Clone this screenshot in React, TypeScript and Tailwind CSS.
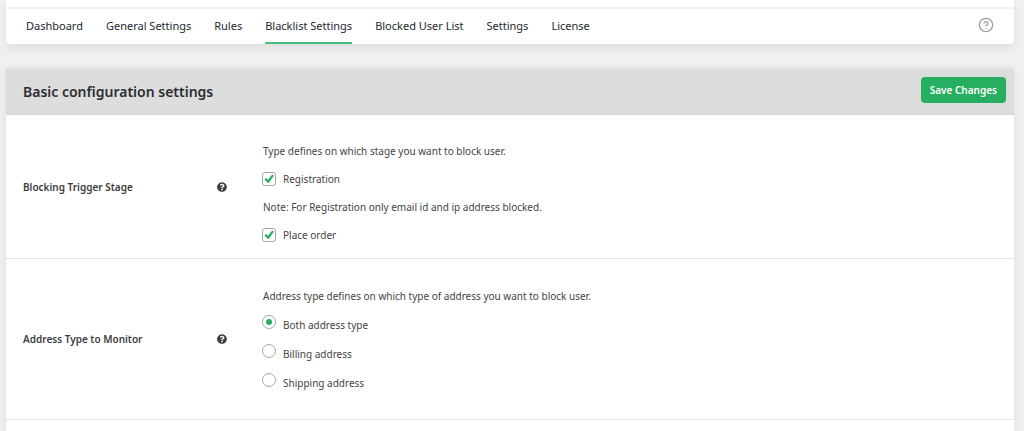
import { useState } from "react";
import { FaQuestionCircle } from "react-icons/fa";
import { CircleHelp } from "lucide-react";

const TABS = [
  "Dashboard",
  "General Settings",
  "Rules",
  "Blacklist Settings",
  "Blocked User List",
  "Settings",
  "License",
];

const ADDRESS_TYPES = [
  { value: "both", label: "Both address type" },
  { value: "billing", label: "Billing address" },
  { value: "shipping", label: "Shipping address" },
];

interface CheckOptionProps {
  label: string;
  checked: boolean;
  onChange: (checked: boolean) => void;
}

function CheckOption({ label, checked, onChange }: CheckOptionProps) {
  return (
    <label className="-ml-px flex w-fit items-center gap-[7px]">
      <span className="grid size-3.5 place-items-center">
        <input
          type="checkbox"
          checked={checked}
          onChange={(e) => onChange(e.target.checked)}
          className="col-start-1 row-start-1 size-3.5 appearance-none rounded-[3px] border border-[#a8a8a8] bg-white"
        />
        {checked && (
          <svg
            viewBox="0 0 10 10"
            className="pointer-events-none col-start-1 row-start-1 size-2.5 fill-[#27ae60]"
          >
            <path d="M8.2 0.6L9.9 1.7L4.4 9.3L0.4 5.7L1.9 3.9L4 5.8Z" />
          </svg>
        )}
      </span>
      {label}
    </label>
  );
}

interface SettingRowProps {
  title: string;
  className: string;
  children: React.ReactNode;
}

function SettingRow({ title, className, children }: SettingRowProps) {
  return (
    <div
      role="group"
      aria-label={title}
      className="flex items-center border-b border-[#e4e4e4] pl-[17px]"
    >
      <div className="flex w-60 shrink-0 items-center justify-between pr-9">
        <h3 className="text-[10px] leading-4 font-semibold text-[#3c3c3c]">
          {title}
        </h3>
        <FaQuestionCircle className="size-2.5 text-[#3c3c3c]" />
      </div>
      <div className={className}>{children}</div>
    </div>
  );
}

export default function App() {
  const [activeTab, setActiveTab] = useState("Blacklist Settings");
  const [registration, setRegistration] = useState(true);
  const [placeOrder, setPlaceOrder] = useState(true);
  const [addressType, setAddressType] = useState("both");

  return (
    <div className="flex min-h-screen flex-col bg-[#f0f0f0] pr-2.5 pl-1.5 font-['Noto_Sans','Open_Sans',sans-serif] text-[10px] leading-4 text-[#444]">
      <header className="rounded-b bg-white pt-[7px] shadow-[0_4px_10px_rgba(0,0,0,0.08)]">
        <nav className="flex items-center border-t-2 border-[#f2f2f2] px-5">
          <ul className="flex grow gap-[23px] text-[11px] text-[#23282d]">
            {TABS.map((tab) => (
              <li key={tab}>
                <a
                  href="#"
                  onClick={() => setActiveTab(tab)}
                  className={`block border-b-2 pt-[9px] pb-2 ${
                    tab === activeTab ? "border-[#4fbf7d]" : "border-transparent"
                  }`}
                >
                  {tab}
                </a>
              </li>
            ))}
          </ul>
          <button aria-label="Help" className="pb-1 text-[#a0a0a0]">
            <CircleHelp className="size-4" />
          </button>
        </nav>
      </header>

      <main className="mt-[25px] grow bg-white shadow-[0_0_8px_rgba(0,0,0,0.08)]">
        <div className="flex h-[46px] items-center justify-between border-b border-[#d4d4d4] bg-[#ddd] pr-2 pl-[17px]">
          <h2 className="text-[14px] font-semibold text-[#2c2d33]">
            Basic configuration settings
          </h2>
          <button className="mb-1 rounded bg-[#27ae60] px-[9px] py-[5px] font-semibold text-white">
            Save Changes
          </button>
        </div>

        <SettingRow
          title="Blocking Trigger Stage"
          className="flex flex-col gap-3 pt-7 pb-[15px]"
        >
          <p>Type defines on which stage you want to block user.</p>
          <CheckOption
            label="Registration"
            checked={registration}
            onChange={setRegistration}
          />
          <p>Note: For Registration only email id and ip address blocked.</p>
          <CheckOption
            label="Place order"
            checked={placeOrder}
            onChange={setPlaceOrder}
          />
        </SettingRow>

        <SettingRow
          title="Address Type to Monitor"
          className="flex flex-col gap-[11px] pt-[29px] pb-7"
        >
          <p>Address type defines on which type of address you want to block user.</p>
          {ADDRESS_TYPES.map((type) => (
            <label
              key={type.value}
              className="-ml-px flex w-fit items-start gap-[7px]"
            >
              <input
                type="radio"
                name="address-type"
                checked={addressType === type.value}
                onChange={() => setAddressType(type.value)}
                className="size-3.5 appearance-none rounded-full border border-[#a8a8a8] bg-white bg-clip-content p-[3px] checked:bg-[#27ae60]"
              />
              <span className="pt-0.5">{type.label}</span>
            </label>
          ))}
        </SettingRow>
      </main>
    </div>
  );
}
